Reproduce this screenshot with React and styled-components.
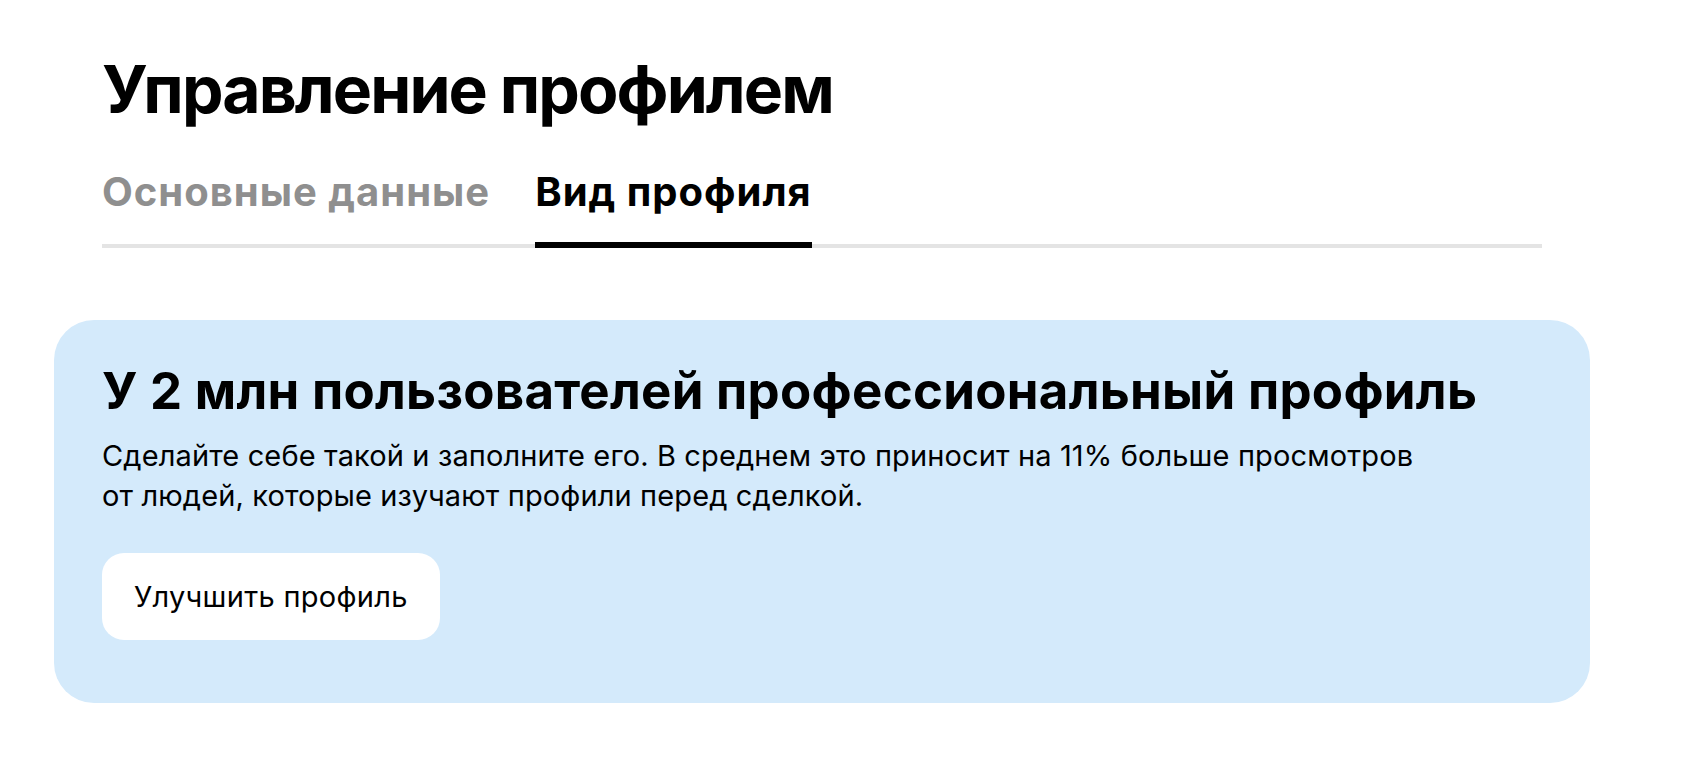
import React, { useState } from "react";
import styled, { createGlobalStyle } from "styled-components";

const GlobalStyle = createGlobalStyle`
  body {
    margin: 0;
    background: #ffffff;
    font-family: Inter, "Noto Sans", sans-serif;
    color: #000000;
  }
`;

const Page = styled.div`
  padding: 53px 0 0 102px;
  width: 1440px;
`;

const Title = styled.h1`
  margin: 0;
  font-size: 66px;
  line-height: 72px;
  font-weight: 700;
  letter-spacing: -1.9px;
`;

const TabList = styled.div`
  display: flex;
  gap: 45px;
  margin-top: 43px;
  border-bottom: 4px solid #e4e4e4;
`;

const Tab = styled.button`
  border: none;
  background: none;
  padding: 0 0 26px;
  margin-bottom: -4px;
  font-family: inherit;
  font-size: 40px;
  line-height: 48px;
  font-weight: 700;
  letter-spacing: 1px;
  color: ${(p) => (p.$active ? "#000000" : "#8f8f8f")};
  border-bottom: 6px solid ${(p) => (p.$active ? "#000000" : "transparent")};
  cursor: pointer;
`;

const Banner = styled.section`
  margin: 72px -48px 0;
  padding: 41px 48px 63px;
  background: #d4eafb;
  border-radius: 40px;
`;

const BannerTitle = styled.h2`
  margin: 0;
  font-size: 51px;
  line-height: 60px;
  font-weight: 700;
  letter-spacing: 0.27px;
`;

const BannerText = styled.p`
  margin: 15px 0 0;
  font-size: 29px;
  line-height: 40px;
  font-weight: 400;
  letter-spacing: 0.13px;
`;

const Button = styled.button`
  margin-top: 37px;
  height: 87px;
  padding: 0 32px;
  border: none;
  border-radius: 22px;
  background: #ffffff;
  font-family: inherit;
  font-size: 29px;
  font-weight: 400;
  letter-spacing: 0.3px;
  color: #000000;
  cursor: pointer;
`;

const tabs = ["Основные данные", "Вид профиля"];

function App() {
  const [active, setActive] = useState(1);

  return (
    <Page>
      <GlobalStyle />
      <Title>Управление профилем</Title>
      <TabList>
        {tabs.map((t, i) => (
          <Tab key={t} $active={i === active} onClick={() => setActive(i)}>
            {t}
          </Tab>
        ))}
      </TabList>
      <Banner>
        <BannerTitle>У 2 млн пользователей профессиональный профиль</BannerTitle>
        <BannerText>
          Сделайте себе такой и заполните его. В среднем это приносит на 11% больше просмотров
          <br />
          от людей, которые изучают профили перед сделкой.
        </BannerText>
        <Button>Улучшить профиль</Button>
      </Banner>
    </Page>
  );
}

export default App;
